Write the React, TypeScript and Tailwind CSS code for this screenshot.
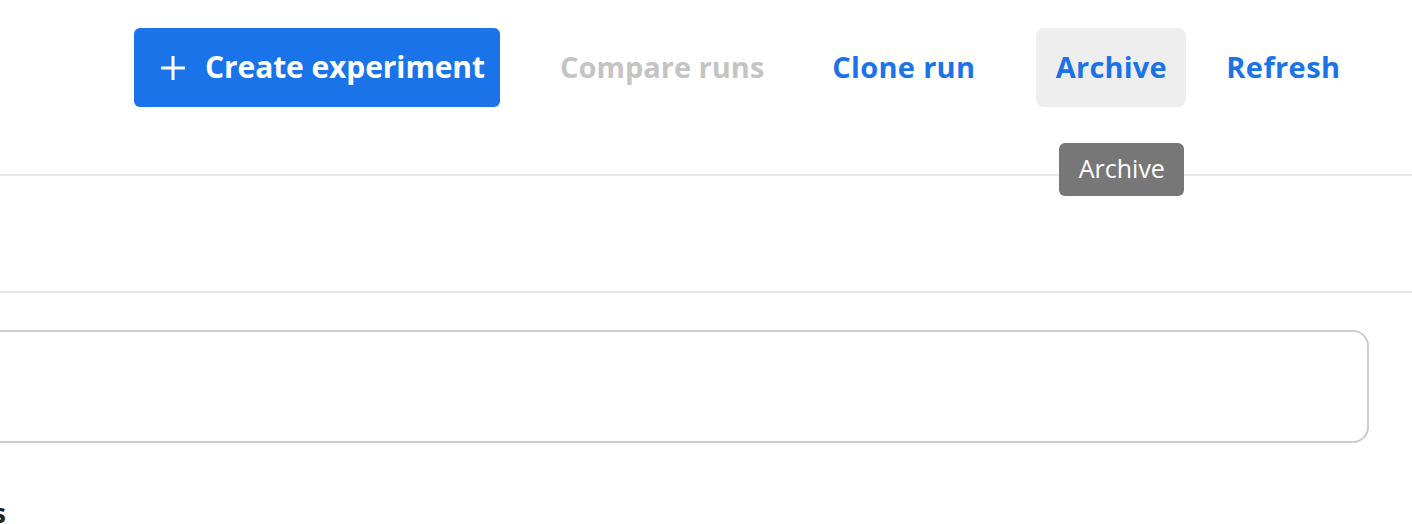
import React from "react";

export default function App() {
  const font = { fontFamily: "'Open Sans', Roboto, Arial, sans-serif" };
  return (
    <div className="relative w-[1412px] h-[524px] overflow-hidden bg-white" style={font}>
      {/* Toolbar */}
      <div className="flex items-center h-[79px] mt-[28px] pl-[134px]">
        <button className="flex items-center h-[79px] w-[366px] pl-[26px] pb-[2px] rounded-[6px] bg-[#1a73e8] text-white text-[30px] font-bold tracking-[-0.1px]">
          <svg width="26" height="26" viewBox="0 0 26 26" className="mr-[19px] mt-[2px]">
            <path d="M13 1v24M1 13h24" stroke="white" strokeWidth="3" fill="none" />
          </svg>
          <span>Create experiment</span>
        </button>
        <button className="h-[79px] ml-[42px] px-[18px] pb-[2px] text-[29px] font-bold text-[#c4c4c4] whitespace-nowrap">Compare runs</button>
        <button className="h-[79px] ml-[32px] px-[18px] pb-[2px] text-[29px] font-bold tracking-[0.3px] text-[#1a73e8] whitespace-nowrap">Clone run</button>
        <div className="relative ml-[43px]">
          <button className="h-[79px] w-[150px] pb-[2px] rounded-[8px] bg-[#eeeeee] text-[29px] font-bold tracking-[0.2px] text-[#1a73e8]">Archive</button>
          <div className="absolute left-[23px] top-[115px] w-[125px] h-[53px] pb-[2px] rounded-[6px] bg-[#777777] text-white text-[25px] flex items-center justify-center z-10">
            Archive
          </div>
        </div>
        <button className="h-[79px] ml-[22px] px-[18px] pb-[2px] text-[29px] font-bold tracking-[0.4px] text-[#1a73e8]">Refresh</button>
      </div>

      <div className="mt-[67px] h-[2px] bg-[#e8e8e8]" />
      <div className="mt-[115px] h-[2px] bg-[#e8e8e8]" />

      <div className="mt-[37px] -ml-[20px] w-[1389px] h-[113px] rounded-[16px] border-2 border-[#cccccc]" />

      <div className="mt-[56px] -ml-[100px] w-[106px] text-right text-[27px] font-bold text-[#202124] leading-none whitespace-nowrap">Runs</div>
    </div>
  );
}
